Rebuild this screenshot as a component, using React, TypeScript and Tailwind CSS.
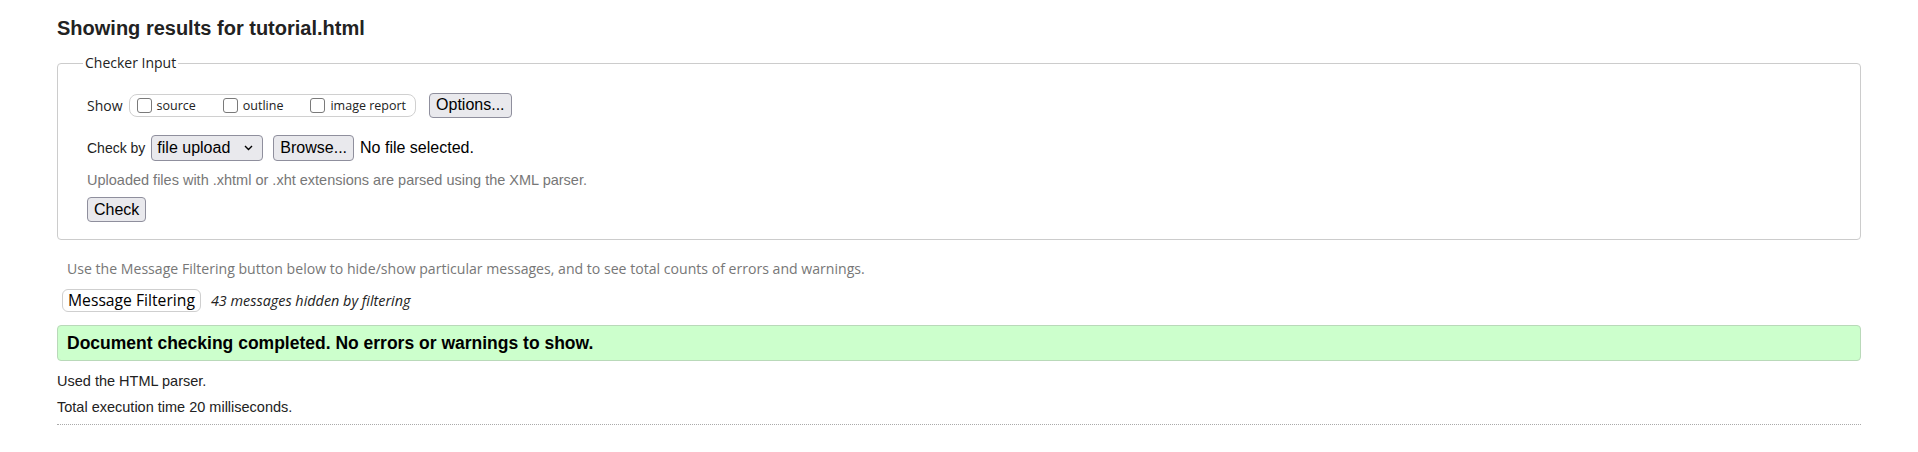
import React from "react";

const arial = "font-['Liberation_Sans',Arial,sans-serif]";
const segoe = "font-['Open_Sans','Noto_Sans',sans-serif]";

function Check({ label }: { label: string }) {
  return (
    <label className="flex items-center gap-[5px]">
      <span className="inline-block w-[15px] h-[15px] border border-[#7a7a7a] rounded-[3px] bg-white" />
      <span className={`${segoe} text-[12.5px] leading-[16px] pt-[1px] text-[#222]`}>{label}</span>
    </label>
  );
}

const btn =
  "h-[25px] px-[6px] border border-[#8f8f9d] rounded-[4px] bg-[#e9e9ed] text-[16px] text-black leading-none flex items-center";

export default function App() {
  return (
    <div className={`${arial} bg-white text-[#222] min-h-[452px] px-[57px]`}>
      <h2 className="pt-[16px] text-[20px] leading-[24px] font-bold text-[#222]">
        Showing results for tutorial.html
      </h2>

      <fieldset className="mt-[13px] border border-[#cccccc] rounded-[4px] pl-[25px] pr-[25px] pb-[17px]">
        <legend className={`${segoe} text-[14px] leading-[20px] px-[2px] text-[#222]`}>Checker Input</legend>
        <div className="pl-[4px]">
          <div className="mt-[19px] h-[26px] flex items-center">
            <span className={`${segoe} text-[14px] text-[#222]`}>Show</span>
            <div className="ml-[6px] h-[23px] flex items-center gap-[27px] pl-[7px] pr-[9px] border border-[#d0d0d0] rounded-[8px]">
              <Check label="source" />
              <Check label="outline" />
              <Check label="image report" />
            </div>
            <button className={`ml-[13px] ${btn}`}>Options...</button>
          </div>

          <div className="mt-[17px] h-[26px] flex items-center">
            <span className="text-[14px] text-[#222]">Check by</span>
            <div className="ml-[6px] h-[26px] w-[112px] flex items-center justify-between pl-[5px] pr-[9px] border border-[#8f8f9d] rounded-[4px] bg-[#e9e9ed] text-[16px] text-black">
              <span>file upload</span>
              <svg width="9" height="6" viewBox="0 0 9 6" fill="none">
                <path d="M1 1l3.5 3.5L8 1" stroke="#000" strokeWidth="1.4" />
              </svg>
            </div>
            <button className={`ml-[10px] h-[26px] ${btn}`}>Browse...</button>
            <span className="ml-[6px] text-[16px] text-black">No file selected.</span>
          </div>

          <p className="mt-[11px] text-[14.5px] leading-[16px] text-[#777]">
            Uploaded files with .xhtml or .xht extensions are parsed using the XML parser.
          </p>

          <div className="mt-[9px] flex">
            <button className={btn}>Check</button>
          </div>
        </div>
      </fieldset>

      <p className={`${segoe} mt-[19px] pl-[10px] text-[14.1px] leading-[20px] text-[#777]`}>
        Use the Message Filtering button below to hide/show particular messages, and to see total counts of errors and warnings.
      </p>

      <div className="mt-[10px] pl-[5px] flex items-center gap-[10px]">
        <button className={`${segoe} h-[23px] px-[5px] border border-[#cfcfcf] rounded-[6px] bg-white text-[15.7px] text-black leading-none flex items-center`}>
          Message Filtering
        </button>
        <span className={`${segoe} italic text-[14.4px] text-[#222]`}>43 messages hidden by filtering</span>
      </div>

      <div className="mt-[13px] h-[36px] flex items-center pl-[9px] border border-[#b9d9b9] rounded-[4px] bg-[#ccffcc]">
        <span className="text-[17.5px] font-bold text-black">Document checking completed. No errors or warnings to show.</span>
      </div>

      <p className="mt-[12px] text-[14.5px] leading-[16px] text-[#222]">Used the HTML parser.</p>
      <p className="mt-[10px] text-[14.5px] leading-[16px] text-[#222]">Total execution time 20 milliseconds.</p>
      <div className="mt-[9px] border-b border-dotted border-[#aaaaaa]" />
    </div>
  );
}
